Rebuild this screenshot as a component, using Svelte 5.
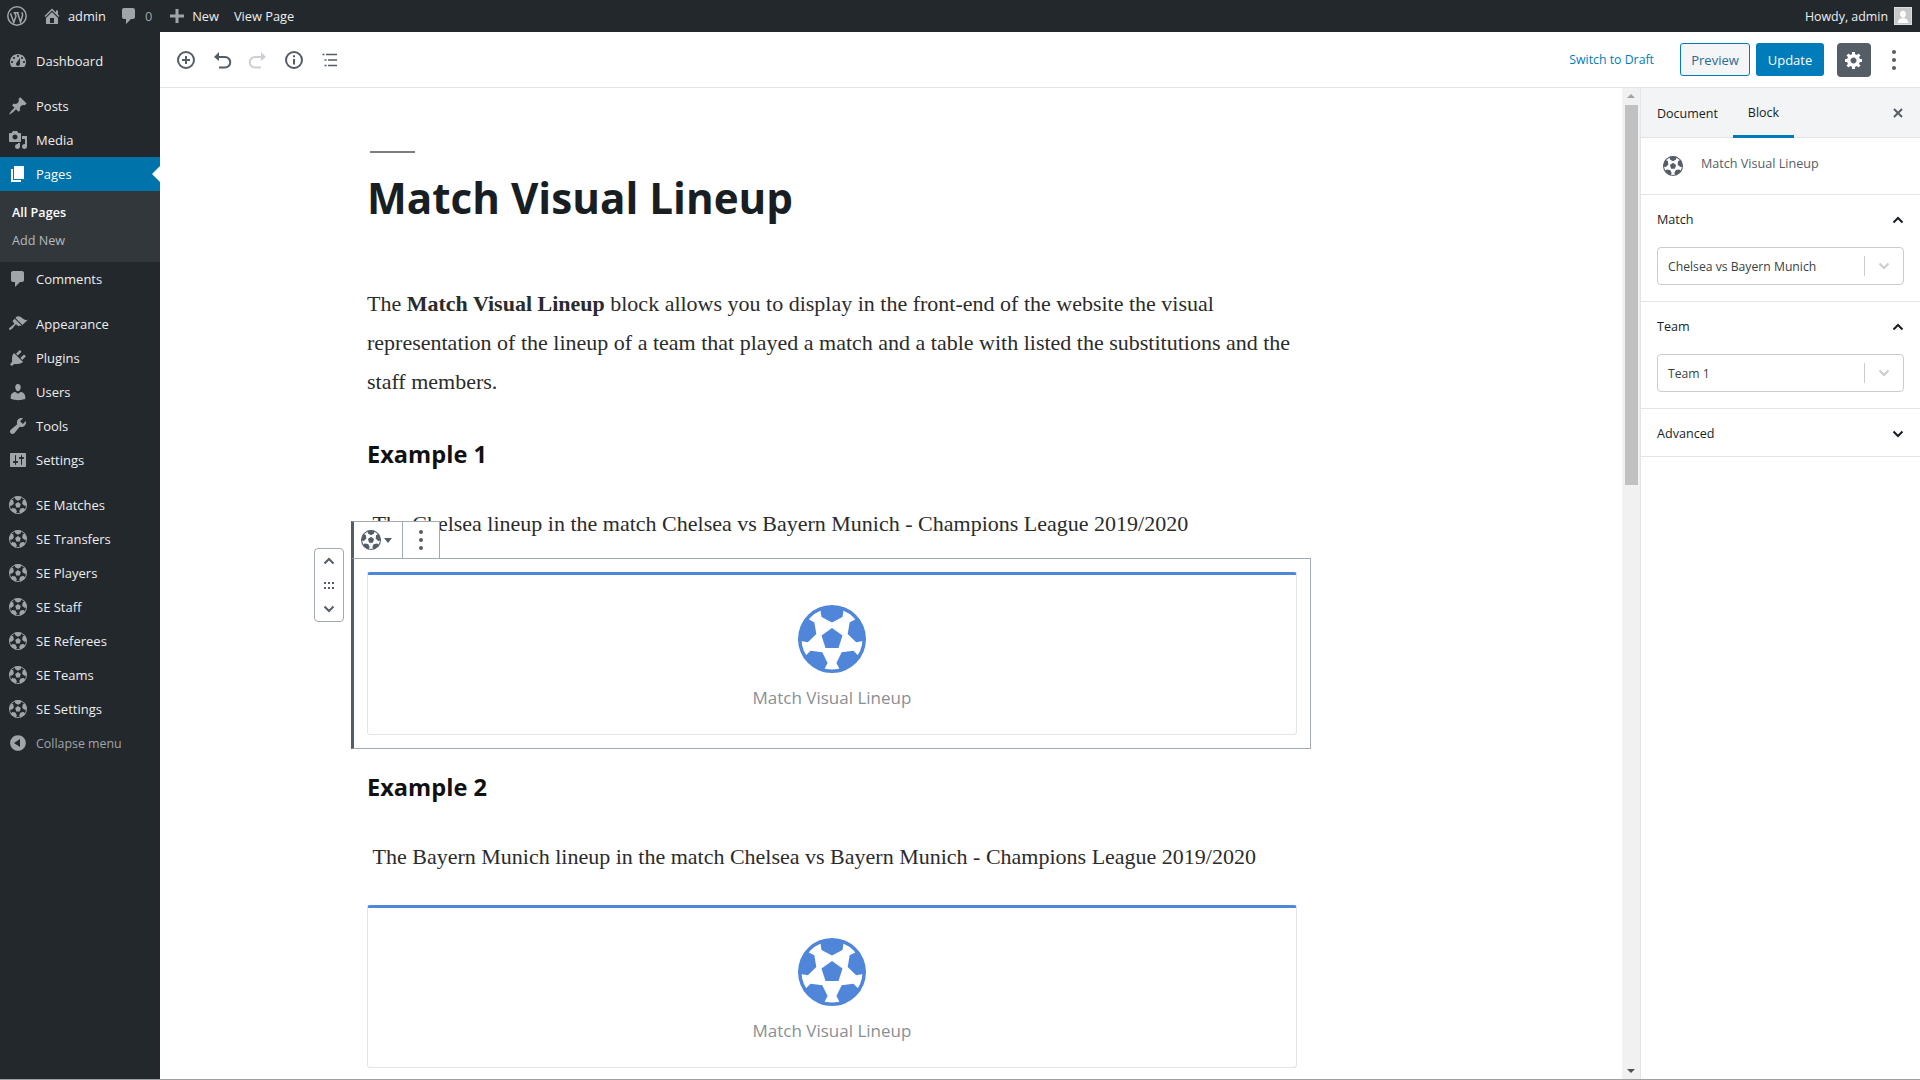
<script lang="ts">
  const icons = {
    dashboard: 'M3.76 16h12.48c1.1-1.37 1.76-3.11 1.76-5 0-4.42-3.58-8-8-8s-8 3.58-8 8c0 1.89.66 3.63 1.76 5zM10 4c.55 0 1 .45 1 1s-.45 1-1 1-1-.45-1-1 .45-1 1-1zM6 6c.55 0 1 .45 1 1s-.45 1-1 1-1-.45-1-1 .45-1 1-1zm8 0c.55 0 1 .45 1 1s-.45 1-1 1-1-.45-1-1 .45-1 1-1zm-5.37 5.55L12 7v6c0 1.1-.9 2-2 2s-2-.9-2-2c0-.57.24-1.08.63-1.45zM4 10c.55 0 1 .45 1 1s-.45 1-1 1-1-.45-1-1 .45-1 1-1zm12 0c.55 0 1 .45 1 1s-.45 1-1 1-1-.45-1-1 .45-1 1-1z',
    post: 'M10.44 3.02l1.82-1.82 6.36 6.35-1.83 1.82c-1.05-.68-2.48-.57-3.41.36l-.75.75c-.92.93-1.04 2.35-.35 3.41l-1.83 1.82-2.41-2.41-2.8 2.79c-.42.42-3.38 2.71-3.8 2.29s1.86-3.39 2.28-3.81l2.79-2.79L4.1 9.36l1.83-1.82c1.05.69 2.48.57 3.4-.36l.75-.75c.93-.92 1.05-2.35.36-3.41z',
    media: 'M13 11V4c0-.55-.45-1-1-1h-1.67L9 1H5L3.67 3H2c-.55 0-1 .45-1 1v7c0 .55.45 1 1 1h10c.55 0 1-.45 1-1zM7 4.5c1.38 0 2.5 1.12 2.5 2.5S8.38 9.5 7 9.5 4.5 8.38 4.5 7 5.62 4.5 7 4.5zM14 6h5v10.5c0 1.38-1.12 2.5-2.5 2.5S14 17.88 14 16.5s1.12-2.5 2.5-2.5c.17 0 .34.02.5.05V9h-3V6zm-4 8.05V13h2v3.5c0 1.38-1.12 2.5-2.5 2.5S7 17.88 7 16.5 8.12 14 9.5 14c.17 0 .34.02.5.05z',
    page: 'M6 15V2h10v13H6zm-1 1h8v2H3V5h2v11z',
    comment: 'M5 2h9c1.1 0 2 .9 2 2v7c0 1.1-.9 2-2 2h-2l-5 5v-5H5c-1.1 0-2-.9-2-2V4c0-1.1.9-2 2-2z',
    appearance: 'M14.48 11.06L7.41 3.99l1.5-1.5c.5-.56 2.3-.47 3.51.32 1.21.8 1.43 1.28 2.91 2.1 1.18.64 2.45 1.26 4.45.85zm-.71.71L6.7 4.7 4.93 6.47c-.39.39-.39 1.02 0 1.41l1.06 1.06c.39.39.39 1.03 0 1.42-.6.6-1.43 1.11-2.21 1.69-.35.26-.7.53-1.01.84C1.43 13.23.4 14.77 1.2 15.6c.8.8 2.35-.22 3.59-1.58.31-.31.58-.66.84-1.01.58-.78 1.09-1.61 1.69-2.21.39-.39 1.02-.39 1.41 0l1.06 1.06c.39.39 1.02.39 1.41 0z',
    plugins: 'M13.11 4.36L9.87 7.6 8 5.73l3.24-3.24c.35-.34 1.05-.2 1.56.32.52.51.66 1.21.31 1.55zm-8 1.77l.91-1.12 9.01 9.01-1.19.84c-.71.71-2.63 1.16-3.82 1.16H6.14L4.9 17.26c-.59.59-1.54.59-2.12 0-.59-.58-.59-1.53 0-2.12l1.24-1.24v-3.88c0-1.13.4-3.19 1.09-3.89zm7.26 3.97l3.24-3.24c.34-.35 1.04-.21 1.55.31.52.51.66 1.21.31 1.55l-3.24 3.25z',
    users: 'M10 9.25c-2.27 0-2.73-3.44-2.73-3.44C7 4.02 7.82 2 9.97 2c2.16 0 2.98 2.02 2.71 3.81 0 0-.41 3.44-2.68 3.44zm0 2.57L12.72 10c2.39 0 4.52 2.33 4.52 4.53v2.49s-3.65 1.13-7.24 1.13c-3.65 0-7.24-1.13-7.24-1.13v-2.49c0-2.25 1.94-4.48 4.47-4.48z',
    tools: 'M16.68 9.77c-1.34 1.34-3.3 1.67-4.95.99l-5.41 6.52c-.99.99-2.59.99-3.58 0s-.99-2.59 0-3.57l6.52-5.42c-.68-1.65-.35-3.61.99-4.95 1.28-1.28 3.12-1.62 4.72-1.06l-2.89 2.89 2.82 2.82 2.86-2.87c.53 1.58.18 3.39-1.08 4.65z',
    settings: 'M18 16V4c0-.55-.45-1-1-1H3c-.55 0-1 .45-1 1v12c0 .55.45 1 1 1h14c.55 0 1-.45 1-1zM8 11h1c.55 0 1 .45 1 1s-.45 1-1 1H8v1.5c0 .28-.22.5-.5.5s-.5-.22-.5-.5V13H6c-.55 0-1-.45-1-1s.45-1 1-1h1V5.5c0-.28.22-.5.5-.5s.5.22.5.5V11zm5-2h-1c-.55 0-1-.45-1-1s.45-1 1-1h1V5.5c0-.28.22-.5.5-.5s.5.22.5.5V7h1c.55 0 1 .45 1 1s-.45 1-1 1h-1v5.5c0 .28-.22.5-.5.5s-.5-.22-.5-.5V9z',
    home: 'M16 8.5l1.53 1.53-1.06 1.06L10 4.62l-6.47 6.47-1.06-1.06L10 2.5l4 4v-2h2v4zm-6-2.46l6 5.99V18H4v-5.97zM12 17v-5H8v5h4z',
    plus: 'M17 8.5v3h-5.5V17h-3v-5.5H3v-3h5.5V3h3v5.5z',
    collapse: 'M10 2.16c4.33 0 7.84 3.51 7.84 7.84s-3.51 7.84-7.84 7.84S2.16 14.33 2.16 10 5.67 2.16 10 2.16zM12 14V6l-6 4z',
    gear: 'M18 12h-2.18c-.17.7-.44 1.35-.81 1.93l1.54 1.54-2.1 2.1-1.54-1.54c-.58.36-1.23.64-1.91.81V19H8v-2.18c-.68-.17-1.33-.45-1.91-.81l-1.54 1.54-2.12-2.12 1.54-1.54c-.36-.58-.64-1.22-.81-1.89H1V9h2.18c.17-.7.44-1.35.81-1.94L2.45 5.52l2.1-2.1 1.54 1.54c.58-.37 1.23-.64 1.91-.81V2h3v2.15c.68.17 1.33.44 1.91.81l1.54-1.54 2.12 2.12-1.54 1.54c.36.59.64 1.24.81 1.92H18v3zm-8.5 1.5c1.66 0 3-1.34 3-3s-1.34-3-3-3-3 1.34-3 3 1.34 3 3 3z',
  };

  const menu = [
    { label: 'Dashboard', icon: icons.dashboard },
    { label: 'Posts', icon: icons.post, gap: true },
    { label: 'Media', icon: icons.media },
    { label: 'Pages', icon: icons.page, current: true },
    { label: 'Comments', icon: icons.comment },
    { label: 'Appearance', icon: icons.appearance, gap: true },
    { label: 'Plugins', icon: icons.plugins },
    { label: 'Users', icon: icons.users },
    { label: 'Tools', icon: icons.tools },
    { label: 'Settings', icon: icons.settings },
    { label: 'SE Matches', gap: true },
    { label: 'SE Transfers' },
    { label: 'SE Players' },
    { label: 'SE Staff' },
    { label: 'SE Referees' },
    { label: 'SE Teams' },
    { label: 'SE Settings' },
  ];

  const spokes = [0, 72, 144, 216, 288];
</script>

{#snippet ball(cls)}
  <svg class="ball {cls}" viewBox="-34 -34 68 68">
    <circle class="ball-fg" r="34" />
    <circle class="ball-bg" r="30.5" />
    {#each spokes as a}
      <path class="ball-fg" transform="rotate({a})" d="M-12-32L12-32 10.5-22 0-16.5-10.5-22z" />
    {/each}
    <path class="ball-fg" d="M0-11L10.5-3.4 6.5 9H-6.5L-10.5-3.4z" />
  </svg>
{/snippet}

{#snippet dash(d, cls)}
  <svg class={cls} viewBox="0 0 20 20"><path d={d} /></svg>
{/snippet}

{#snippet chev(cls, up)}
  <svg class="chev {cls}" viewBox="0 0 12 8">
    <path d={up ? 'M1.5 6.5L6 2l4.5 4.5' : 'M1.5 1.5L6 6l4.5-4.5'} />
  </svg>
{/snippet}

<div class="screen">
  <header class="adminbar">
    <svg class="wp-logo" viewBox="0 0 20 20">
      <circle cx="10" cy="10" r="9.2" />
      <path d="M3.5 7.2l3.3 9.3 2.2-6.5-1.3-3.3M6.5 6.7h5.3M10.5 6.7l3 9.3 2-6.2c.5-1.6-.2-2.6-.7-3.5" />
    </svg>
    <span class="bar-item home">{@render dash(icons.home, 'bar-icon')}<span>admin</span></span>
    <span class="bar-item comments">{@render dash(icons.comment, 'bar-icon')}<span class="zero">0</span></span>
    <span class="bar-item new">{@render dash(icons.plus, 'bar-icon')}<span>New</span></span>
    <span class="bar-item view">View Page</span>
    <span class="howdy">Howdy, admin</span>
    <span class="avatar">
      <svg viewBox="0 0 18 18"><path d="M9 3c2 0 3.3 1.6 3.3 3.8S11 11 9 11 5.7 9 5.7 6.8 7 3 9 3zM3 17c0-3 2-5 4-5.5h4c2 .5 4 2.5 4 5.500z" /></svg>
    </span>
  </header>

  <div class="body">
    <nav class="adminmenu">
      {#each menu as m}
        <div class="menu-item" class:gap={m.gap} class:current={m.current}>
          {#if m.icon}
            {@render dash(m.icon, 'menu-icon')}
          {:else}
            {@render ball('menu-ball')}
          {/if}
          <span>{m.label}</span>
        </div>
        {#if m.current}
          <div class="submenu">
            <div class="sub strong">All Pages</div>
            <div class="sub">Add New</div>
          </div>
        {/if}
      {/each}
      <div class="menu-item collapse">
        {@render dash(icons.collapse, 'menu-icon')}
        <span>Collapse menu</span>
      </div>
    </nav>

    <div class="editor">
      <div class="toolbar">
        <div class="tools-left">
          <svg class="tool" viewBox="0 0 24 24"><circle cx="12" cy="12" r="8" /><path d="M12 8v8M8 12h8" /></svg>
          <svg class="tool" viewBox="0 0 24 24"><path d="M7 9h8a5 5 0 0 1 0 10.5H9" /><path class="solid" d="M9 4v9L4 9z" /></svg>
          <svg class="tool off" viewBox="0 0 24 24"><path d="M17 9H9a5 5 0 0 0 0 10.5h6" /><path class="solid" d="M15 4v9l5-4z" /></svg>
          <svg class="tool" viewBox="0 0 24 24"><circle cx="12" cy="12" r="8" /><path d="M12 11v5.5M12 7.2v2" /></svg>
          <svg class="tool thin" viewBox="0 0 24 24"><path d="M8 6.5h11M10 12h9M10 17.5h9M4.5 6.5h2M6.5 12h2M6.5 17.5h2" /></svg>
        </div>
        <div class="tools-right">
          <span class="draft">Switch to Draft</span>
          <span class="btn preview">Preview</span>
          <span class="btn update">Update</span>
          <span class="gear-btn">{@render dash(icons.gear, 'gear')}</span>
          <span class="more"><i></i><i></i><i></i></span>
        </div>
      </div>

      <div class="workspace">
        <main class="content">
          <div class="post">
            <div class="title-rule"></div>
            <h1>Match Visual Lineup</h1>
            <p class="intro">The <strong>Match Visual Lineup</strong> block allows you to display in the front-end of the website the visual representation of the lineup of a team that played a match and a table with listed the substitutions and the staff members.</p>
            <h2>Example 1</h2>
            <p class="line">&nbsp;The Chelsea lineup in the match Chelsea vs Bayern Munich - Champions League 2019/2020</p>

            <div class="selected">
              <div class="block-tools">
                <span class="tool-cell type">{@render ball('tools-ball')}<b></b></span>
                <span class="tool-cell dots"><i></i><i></i><i></i></span>
              </div>
              <div class="mover">
                {@render chev('mover-chev', true)}
                <svg class="grip" viewBox="0 0 10 7"><path d="M0 0h2v2H0zM4 0h2v2H4zM8 0h2v2H8zM0 5h2v2H0zM4 5h2v2H4zM8 5h2v2H8z" /></svg>
                {@render chev('mover-chev', false)}
              </div>
              <div class="placeholder">
                {@render ball('big-ball')}
                <span>Match Visual Lineup</span>
              </div>
            </div>

            <h2 class="second">Example 2</h2>
            <p class="line">&nbsp;The Bayern Munich lineup in the match Chelsea vs Bayern Munich - Champions League 2019/2020</p>

            <div class="placeholder next">
              {@render ball('big-ball')}
              <span>Match Visual Lineup</span>
            </div>
          </div>
        </main>

        <div class="scrollbar">
          <span class="arrow-up"></span>
          <span class="thumb"></span>
          <span class="arrow-down"></span>
        </div>

        <aside class="panel">
          <div class="tabs">
            <span class="tab">Document</span>
            <span class="tab active">Block</span>
            <svg class="close" viewBox="0 0 12 12"><path d="M2 2l8 8M10 2l-8 8" /></svg>
          </div>
          <div class="block-card">
            {@render ball('card-ball')}
            <span>Match Visual Lineup</span>
          </div>
          <section class="group">
            <div class="group-head"><span>Match</span>{@render chev('head-chev', true)}</div>
            <div class="select"><span>Chelsea vs Bayern Munich</span><i></i>{@render chev('sel-chev', false)}</div>
          </section>
          <section class="group">
            <div class="group-head"><span>Team</span>{@render chev('head-chev', true)}</div>
            <div class="select"><span>Team 1</span><i></i>{@render chev('sel-chev', false)}</div>
          </section>
          <section class="group closed">
            <div class="group-head"><span>Advanced</span>{@render chev('head-chev', false)}</div>
          </section>
        </aside>
      </div>
    </div>
  </div>
  <div class="page-edge"></div>
</div>

<style>
  :global(body) { margin: 0; background: #fff; }

  .screen {
    width: 1920px; height: 1080px; overflow: hidden;
    display: flex; flex-direction: column;
    font-family: "Open Sans", "Noto Sans", sans-serif; font-size: 13px; color: #191e23;
  }
  .page-edge { height: 1px; flex-shrink: 0; background: #a0a0a0; }

  /* Admin bar */
  .adminbar {
    height: 32px; flex-shrink: 0; background: #23282d; color: #eee;
    display: flex; align-items: center; font-size: 12.8px; position: relative;
  }
  .wp-logo { width: 20px; height: 20px; margin-left: 7px; fill: none; stroke: #a0a5aa; stroke-width: 1.5; }
  .bar-item { display: flex; align-items: center; }
  .bar-icon { width: 20px; height: 20px; fill: #a0a5aa; }
  .home { margin-left: 15px; gap: 6px; }
  .comments { margin-left: 13px; gap: 6px; }
  .zero { color: #a0a5aa; }
  .new { margin-left: 15px; gap: 5px; }
  .view { margin-left: 15px; }
  .howdy { margin-left: auto; margin-right: 6px; font-size: 12.4px; }
  .avatar { width: 18px; height: 18px; background: #c8c8c8; margin-right: 8px; border: 1px solid #ddd; box-sizing: border-box; display: flex; }
  .avatar svg { width: 100%; height: 100%; fill: #fff; }

  .body { flex: 1; display: flex; min-height: 0; }

  /* Admin menu */
  .adminmenu { width: 160px; flex-shrink: 0; background: #23282d; padding-top: 12px; color: #eee; }
  .menu-item { height: 34px; display: flex; align-items: center; font-size: 13px; }
  .menu-item.gap { margin-top: 11px; }
  .menu-item > span { margin-left: 8px; }
  .menu-item.current { background: #0073aa; color: #fff; position: relative; }
  .menu-item.current::after {
    content: ""; position: absolute; right: 0; top: 9px;
    border: 8px solid transparent; border-right-color: #fff; border-left: 0;
  }
  .menu-item.current :global(.menu-icon) { fill: #fff; }
  .collapse { color: #a0a5aa; font-size: 12.4px; }
  :global(.menu-icon) { width: 20px; height: 20px; margin-left: 8px; fill: #a0a5aa; flex-shrink: 0; }
  :global(.menu-ball) { width: 18px; height: 18px; margin: 0 1px 0 9px; flex-shrink: 0; }
  :global(.menu-ball .ball-fg) { fill: #a0a5aa; }
  :global(.menu-ball .ball-bg) { fill: #23282d; }
  .submenu { height: 71px; background: #32373c; padding-top: 8px; box-sizing: border-box; }
  .sub { height: 28px; line-height: 28px; padding-left: 12px; color: #b4b9be; font-size: 12.6px; }
  .sub.strong { color: #fff; font-weight: 600; }

  /* Top toolbar */
  .editor { flex: 1; min-width: 0; display: flex; flex-direction: column; }
  .toolbar {
    height: 56px; flex-shrink: 0; box-sizing: border-box; border-bottom: 1px solid #e2e4e7;
    display: flex; align-items: center; justify-content: space-between;
  }
  .tools-left { display: flex; gap: 12px; margin-left: 14px; }
  .tool { width: 24px; height: 24px; fill: none; stroke: #555d66; stroke-width: 2; }
  .tool.thin { stroke-width: 1.5; }
  .tool .solid { fill: #555d66; stroke: none; }
  .tool.off { stroke: #ccd0d4; }
  .tool.off .solid { fill: #ccd0d4; }
  .tools-right { display: flex; align-items: center; }
  .draft { color: #007cba; font-size: 12.3px; margin-right: 26px; margin-bottom: 1px; }
  .btn {
    height: 33px; box-sizing: border-box; border-radius: 3px; display: flex;
    align-items: center; justify-content: center; font-size: 13px;
  }
  .preview { width: 70px; border: 1px solid #007cba; background: #f3f5f6; color: #2b6a95; }
  .update { width: 68px; margin-left: 6px; background: #007cba; color: #fff; }
  .gear-btn { width: 34px; height: 34px; margin-left: 13px; background: #555d66; border-radius: 4px; display: flex; align-items: center; justify-content: center; }
  :global(.gear) { width: 20px; height: 20px; fill: #fff; }
  .more { width: 34px; margin-left: 6px; margin-right: 9px; display: flex; flex-direction: column; align-items: center; gap: 4px; }
  .more i { width: 4px; height: 4px; border-radius: 50%; background: #555d66; }

  .workspace { flex: 1; display: flex; min-height: 0; }

  /* Document */
  .content { flex: 1; min-width: 0; overflow: hidden; }
  .post { width: 930px; margin-left: 207px; position: relative; }
  .title-rule { width: 45px; height: 2px; margin: 63px 0 0 3px; background: #7e7e7e; }
  h1 { margin: 16px 0 0; font-size: 42.2px; line-height: 58px; font-weight: 700; color: #191e23; }
  .intro, .line { font-family: "Liberation Serif", serif; font-size: 22px; line-height: 39px; color: #2b2b2b; margin: 0; }
  .intro { margin-top: 57px; }
  h2 { font-size: 23.6px; font-weight: 700; line-height: 36px; margin: 35px 0 0; color: #111; }
  .line { margin-top: 32px; }

  .selected { position: relative; margin: 15px -14px 0 -16px; padding: 13px 13px 13px 13px; border: 1px solid #a2aab2; border-left: 3px solid #555d66; }
  .block-tools {
    position: absolute; left: -3px; top: -38px; height: 37px; background: #fff; display: flex;
    border-top: 1px solid #a2aab2; border-right: 1px solid #a2aab2; border-left: 3px solid #555d66; box-sizing: border-box;
  }
  .tool-cell { display: flex; align-items: center; justify-content: center; box-sizing: border-box; }
  .tool-cell.type { width: 49px; border-right: 1px solid #a2aab2; gap: 3px; padding-right: 3px; }
  .tool-cell.type b { border: 4px solid transparent; border-top: 5px solid #555d66; border-bottom: 0; }
  .tool-cell.dots { width: 36px; padding-right: 1px; flex-direction: column; gap: 4px; }
  .tool-cell.dots i { width: 4px; height: 4px; border-radius: 50%; background: #555d66; }
  :global(.tools-ball) { width: 20px; height: 20px; }
  :global(.tools-ball .ball-fg) { fill: #555d66; }
  :global(.tools-ball .ball-bg) { fill: #fff; }
  .mover {
    position: absolute; left: -40px; top: -11px; width: 30px; height: 74px; box-sizing: border-box;
    border: 1px solid #a2aab2; border-radius: 4px; background: #fff;
    display: flex; flex-direction: column; align-items: center; justify-content: space-between; padding: 8px 0;
  }
  :global(.mover-chev) { width: 12px; height: 8px; stroke: #555d66; }
  .grip { width: 10px; height: 7px; fill: #555d66; }

  .placeholder {
    box-sizing: border-box; height: 163px; border: 1px solid #e2e4e7; border-top: 3px solid #4f86d9;
    border-radius: 3px; display: flex; flex-direction: column; align-items: center;
    color: #8a8f94; font-size: 17px;
  }
  :global(.big-ball) { width: 68px; height: 68px; margin-top: 30px; flex-shrink: 0; }
  :global(.big-ball .ball-fg) { fill: #4f86d9; }
  :global(.big-ball .ball-bg) { fill: #fff; }
  .placeholder span { margin-top: 12px; line-height: 25px; }
  h2.second { margin-top: 20px; }
  .next { margin-top: 29px; }

  /* Fake scrollbar */
  .scrollbar { width: 18px; box-sizing: border-box; background: #f1f1f1; position: relative; flex-shrink: 0; display: flex; flex-direction: column; align-items: center; }
  .thumb { width: 13px; height: 380px; background: #c1c1c1; margin-top: 3px; }
  .arrow-up { margin-top: 6px; border: 4px solid transparent; border-bottom: 4px solid #a3a3a3; border-top: 0; margin-bottom: 4px; }
  .arrow-down { margin-top: auto; margin-bottom: 6px; border: 4px solid transparent; border-top: 4px solid #505050; border-bottom: 0; }

  /* Settings sidebar */
  .panel { width: 280px; flex-shrink: 0; box-sizing: border-box; border-left: 1px solid #e2e4e7; }
  .tabs { height: 50px; box-sizing: border-box; background: #f3f4f5; border-bottom: 1px solid #e2e4e7; display: flex; position: relative; font-size: 12.5px; }
  .tab { height: 50px; box-sizing: border-box; display: flex; align-items: center; padding: 1px 16px 0; }
  .tab.active { width: 61px; margin-left: -1px; justify-content: center; padding: 2px 0 0; font-weight: 500; border-bottom: 3px solid #007cba; }
  .close { position: absolute; right: 16px; top: 19px; width: 12px; height: 12px; stroke: #555d66; stroke-width: 2; }
  .block-card { height: 57px; box-sizing: border-box; border-bottom: 1px solid #e2e4e7; display: flex; align-items: center; color: #555d66; font-size: 12.6px; padding-left: 22px; }
  .block-card span { margin-bottom: 6px; }
  :global(.card-ball) { width: 20px; height: 20px; margin-right: 18px; }
  :global(.card-ball .ball-fg) { fill: #555d66; }
  :global(.card-ball .ball-bg) { fill: #fff; }
  .group { height: 107px; box-sizing: border-box; border-bottom: 1px solid #e2e4e7; padding: 0 16px; }
  .group.closed { height: 48px; }
  .group-head { height: 49px; display: flex; align-items: center; justify-content: space-between; font-weight: 500; font-size: 12.6px; box-sizing: border-box; }
  .chev { fill: none; stroke-width: 2; }
  :global(.head-chev) { width: 12px; height: 8px; stroke: #191e23; }
  .select {
    height: 38px; margin-top: 3px; box-sizing: border-box; border: 1px solid #ccc; border-radius: 4px;
    display: flex; align-items: center; padding-left: 10px; font-size: 12.2px; color: #3a3f45;
  }
  .select span { flex: 1; }
  .select i { width: 1px; height: 20px; background: #ccc; }
  :global(.sel-chev) { width: 12px; height: 8px; stroke: #ccc; margin: 0 13px; }
</style>
